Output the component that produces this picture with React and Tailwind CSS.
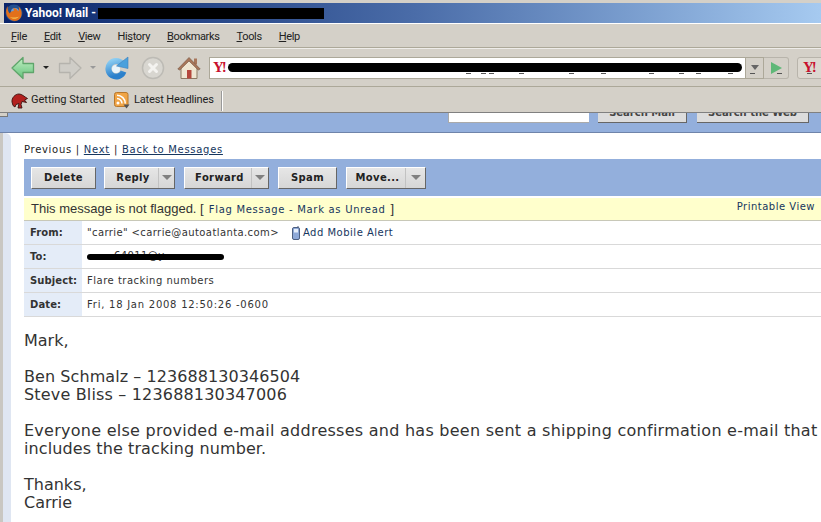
import React from "react";

const sans = "font-['Roboto','Liberation_Sans',sans-serif]";
const verdana = "font-['DejaVu_Sans',sans-serif]";

// little bits of the url that stick out under the scribble in the address bar
const urlTicks = [257, 272, 280, 310, 360, 392, 440, 470, 487, 519, 541, 568, 598, 630, 666, 690, 700, 724];

const Blot = ({ className }) => <div className={"bg-black rounded-full " + className} />;

const Menu = ({ u, rest, pre = "" }) => (
  <span>
    {pre}
    <span className="underline">{u}</span>
    {rest}
  </span>
);

const Firefox = () => (
  <svg width="18" height="18" viewBox="0 0 18 18" className="shrink-0">
    <circle cx="9" cy="9" r="8.500" fill="#24508f" />
    <circle cx="10" cy="8" r="4" fill="#6f9fd6" />
    <path d="M2.500 2c-2.500 5-1.500 10 2 13s9.500 2.500 11.500-2c1.500-4 .5-8-2.500-10.500 1 2 .5 4-.5 5-.5-2-2.500-3.500-5-3.500 1 1 1 2 .5 3-2 0-3.500 1-3.500 2.500-1.500-1-2.500-3.500-2.500-7.500z" fill="#e2701a" />
    <path d="M5 13c2 2.500 7 2.500 9-.5-2 1-6 1.500-9 .5z" fill="#f6c04e" />
  </svg>
);

const BackArrow = () => (
  <svg width="24" height="24" viewBox="0 0 24 24" className="shrink-0">
    <defs>
      <linearGradient id="backFill" x1="0" y1="0" x2="0" y2="1">
        <stop offset="0" stopColor="#c4efc4" />
        <stop offset="1" stopColor="#62c27a" />
      </linearGradient>
    </defs>
    <path d="M1 12 12 1.500V7.500h10.500v9H12v6z" fill="url(#backFill)" stroke="#5fa56b" strokeWidth="1.300" strokeLinejoin="round" />
  </svg>
);

const ForwardArrow = () => (
  <svg width="24" height="24" viewBox="0 0 24 24">
    <path d="M23 12 12 1.500V7.500H1.500v9H12v6z" fill="#cfcdc7" stroke="#b5b3ad" strokeWidth="1.300" strokeLinejoin="round" />
  </svg>
);

const Reload = () => (
  <svg width="24" height="24" viewBox="0 0 24 24">
    <defs>
      <linearGradient id="reloadFill" x1="0" y1="0" x2="0.300" y2="1">
        <stop offset="0" stopColor="#8ccdf2" />
        <stop offset="1" stopColor="#2b80cb" />
      </linearGradient>
    </defs>
    <circle cx="11" cy="13" r="4" fill="#eaf5fb" />
    <path d="M17 7.500A7.800 7.800 0 1 0 18.500 15.500" fill="none" stroke="url(#reloadFill)" strokeWidth="6" />
    <path d="M23 1v11.500L11.500 10z" fill="#4aa0dc" stroke="#3a80bd" strokeWidth="0.600" strokeLinejoin="round" />
  </svg>
);

const Stop = () => (
  <svg width="24" height="24" viewBox="0 0 24 24">
    <circle cx="12" cy="12" r="10.500" fill="#d8d6d0" stroke="#bdbbb5" strokeWidth="1.500" />
    <path d="m8.500 8.500 7 7m0-7-7 7" stroke="#f4f3f0" strokeWidth="3" strokeLinecap="round" />
  </svg>
);

const Home = () => (
  <svg width="24" height="24" viewBox="0 0 24 24">
    <rect x="17" y="2.500" width="3" height="6" fill="#a8765a" />
    <path d="M4 12v10.500h16V12L12 4z" fill="#efe6d2" stroke="#8d7a62" />
    <path d="M.8 13 12 1.500 23.200 13l-2 1L12 5l-9.200 9z" fill="#a8765a" stroke="#7d5b47" strokeWidth="0.700" />
    <rect x="10" y="14" width="4.500" height="8.500" fill="#b5483c" />
  </svg>
);

const Yahoo = () => (
  <span className="font-['Liberation_Serif',serif] font-bold text-[15px] leading-none text-[#c8102e] tracking-[-2px]">Y!</span>
);

const Dino = () => (
  <svg width="17" height="16" viewBox="0 0 17 16" className="shrink-0">
    <path d="M1 9c-.5-4 3-8 7-8 3 0 5 2.500 8.500 4.500l-3 1.500 2 2.500-4.500-1-1 3 1 3.500H7l1-4.500-3 1-1 2.500-2-1.500z" fill="#b3201e" stroke="#3a1210" strokeWidth="0.900" />
  </svg>
);

const Rss = () => (
  <svg width="16" height="17" viewBox="0 0 16 17">
    <rect x="0.500" y="0.500" width="13.500" height="14" rx="2" fill="#f0a445" stroke="#b8772b" />
    <circle cx="4" cy="11" r="1.500" fill="#fff" />
    <path d="M3 6.500a5 5 0 0 1 5 5M3 3.200a8.300 8.300 0 0 1 8.300 8.300" fill="none" stroke="#fff" strokeWidth="1.500" />
    <path d="M9.500 12.500h6l-3 4z" fill="#555" />
  </svg>
);

const Phone = () => (
  <svg width="8" height="14" viewBox="0 0 8 14">
    <rect x="0.500" y="1.500" width="7" height="12" rx="1.500" fill="#8ea9d8" stroke="#4d5f80" />
    <rect x="2" y="3" width="4" height="3.500" fill="#e5eefb" />
    <path d="M6 1.500V0" stroke="#4d5f80" />
  </svg>
);

const Button = ({ label, width, menu, menuWidth }) => (
  <div
    className={"flex h-[22px] bg-gradient-to-b from-[#e6e6e6] to-[#d6d6d6] border border-t-white border-l-white border-r-[#666] border-b-[#666] text-[10px] tracking-[0.35px] font-bold text-[#222] " + width}
  >
    <div className={"flex-1 flex items-center justify-center " + (menu ? "pl-[3px]" : "")}>{label}</div>
    {menu && (
      <div className={"flex items-center justify-center border-l border-[#c2c2c2] " + menuWidth}>
        <div className="w-0 h-0 border-x-[5px] border-x-transparent border-t-[5px] border-t-[#808080]" />
      </div>
    )}
  </div>
);

const Row = ({ label, tracking = "tracking-[0.4px]", children }) => (
  <div className="flex h-6 border-b border-[#d9d9d9]">
    <div className="w-[58px] shrink-0 bg-[#e4ecf8] pl-[6px] flex items-center font-bold text-[#333] tracking-[0.1px]">{label}</div>
    <div className={"flex-1 pl-[5px] flex items-center text-[#333] " + tracking}>{children}</div>
  </div>
);

export default function App() {
  return (
    <div className="w-[821px] h-[522px] overflow-hidden bg-white flex flex-col">
      {/* title bar */}
      <div className="h-[3px] bg-[#d4d0c8]" />
      <div className="bg-[#d4d0c8] pl-[4px]">
        <div className={"h-[20px] flex items-center pl-[1px] gap-[2px] bg-gradient-to-r from-[#0a246a] via-[#4a6ca8] to-[#a6caf0] text-white text-[12px] font-bold " + sans}>
          <Firefox />
          <span>Yahoo! Mail -</span>
          <Blot className="w-[226px] h-[11px] rounded-none" />
        </div>
      </div>
      <div className="h-[1px] bg-white" />

      {/* menu bar */}
      <div className={"h-[24px] pt-[3px] bg-[#d4d0c8] border-b border-[#aca899] flex items-center pl-[11px] gap-[17px] text-[11px] tracking-[-0.35px] text-[#222] " + sans}>
        <Menu u="F" rest="ile" />
        <Menu u="E" rest="dit" />
        <Menu u="V" rest="iew" />
        <Menu pre="Hi" u="s" rest="tory" />
        <Menu u="B" rest="ookmarks" />
        <Menu u="T" rest="ools" />
        <Menu u="H" rest="elp" />
      </div>

      {/* navigation toolbar */}
      <div className="h-[39px] relative bg-[#d4d0c8] border-t border-white/60 border-b border-b-[#aca899] flex items-center pl-[11px]">
        <BackArrow />
        <div className="ml-[8px] w-0 h-0 shrink-0 border-x-[3px] border-x-transparent border-t-[3px] border-t-[#222]" />
        <div className="ml-[9px] shrink-0"><ForwardArrow /></div>
        <div className="ml-[8px] w-0 h-0 shrink-0 border-x-[3px] border-x-transparent border-t-[3px] border-t-[#999]" />
        <div className="ml-[9px] shrink-0"><Reload /></div>
        <div className="ml-[12px] shrink-0"><Stop /></div>
        <div className="ml-[12px] shrink-0"><Home /></div>
        <div className="ml-[8px] w-[537px] h-[22px] bg-white border border-[#aca899] flex items-center pl-[3px] shrink-0">
          <Yahoo />
          <Blot className="ml-[3px] w-[514px] h-[9px]" />
        </div>
        <div className="w-[18px] h-[22px] border border-l-0 border-[#aca899] flex items-center justify-center shrink-0">
          <div className="w-0 h-0 border-x-[4px] border-x-transparent border-t-[5px] border-t-[#666]" />
        </div>
        <div className="w-[25px] h-[22px] border border-l-0 border-[#b8b4ab] rounded-r-[3px] flex items-center justify-center shrink-0">
          <div className="w-0 h-0 border-y-[6px] border-y-transparent border-l-[11px] border-l-[#5fb878]" />
        </div>
        <div className="ml-[8px] w-[30px] h-[22px] bg-[#dcd8d0] border border-[#b8b4ab] rounded-l-[3px] pl-[5px] flex items-center shrink-0">
          <Yahoo />
        </div>
        {urlTicks.map((x) => (
          <div key={x} className="absolute top-[24px] w-[5px] h-[1px] bg-[#555]" style={{ left: x + 209 }} />
        ))}
      </div>

      {/* bookmarks */}
      <div className={"h-[26px] pt-[2px] bg-[#d4d0c8] border-b border-[#808080] flex items-center pl-[11px] text-[11px] text-[#222] " + sans}>
        <Dino />
        <span className="ml-[3px]">Getting Started</span>
        <span className="ml-[9px]"><Rss /></span>
        <span className="ml-[4px] tracking-[-0.15px]">Latest Headlines</span>
        <div className="ml-[7px] h-[20px] w-[2px] border-l border-[#999] border-r border-r-white" />
      </div>

      {/* page header strip, cut off by the browser chrome */}
      <div className="h-[20px] bg-[#93afdc] border-b border-[#6f84aa] flex justify-end relative">
        <div className="absolute left-0 top-0 w-[8px] h-[4px] bg-[#d4d0c8] border-b border-r border-[#777]" />
        <div className="flex items-start pr-[12px]">
          <div className="w-[141px] h-[10px] bg-white border-b border-l border-[#aaa]" />
          <div className={"ml-[9px] w-[89px] h-[10px] bg-[#dcdcdc] border-b border-r border-[#666] overflow-hidden " + verdana}>
            <div className="text-[10px] font-bold text-[#444] text-center leading-[10px] -mt-[5px]">Search Mail</div>
          </div>
          <div className={"ml-[10px] w-[112px] h-[10px] bg-[#dcdcdc] border-b border-r border-[#666] overflow-hidden " + verdana}>
            <div className="text-[10px] font-bold text-[#444] text-center leading-[10px] -mt-[5px]">Search the Web</div>
          </div>
        </div>
      </div>

      {/* message page */}
      <div className={"flex-1 flex min-h-0 " + verdana}>
        <div className="w-[11px] shrink-0 bg-[#dfe6f2] rounded-tr-[6px] border-l-[3px] border-[#c9c7c2]" />
        <div className="w-[13px] shrink-0" />
        <div className="flex-1 min-w-0">
          <div className="h-[26px] pt-[6px] flex items-center text-[10px] tracking-[0.7px] text-[#222] gap-[4px]">
            <span>Previous |</span>
            <span className="underline text-[#16365e]">Next</span>
            <span>|</span>
            <span className="underline text-[#16365e]">Back to Messages</span>
          </div>

          <div className="h-[37px] bg-[#93afdc] flex items-center pl-[7px]">
            <Button label="Delete" width="w-[65px] mr-[8px]" />
            <Button label="Reply" width="w-[71px] mr-[9px]" menu menuWidth="w-[16px]" />
            <Button label="Forward" width="w-[85px] mr-[9px]" menu menuWidth="w-[17px]" />
            <Button label="Spam" width="w-[59px] mr-[9px]" />
            <Button label="Move..." width="w-[80px]" menu menuWidth="w-[20px]" />
          </div>

          <div className="h-[23px] mt-[2px] bg-[#ffffcc] border-b border-[#c8c8b8] flex items-center pl-[7px] pr-[6px]">
            <span className="font-['Liberation_Sans',sans-serif] text-[13px] text-[#333]">This message is not flagged. [</span>
            <span className="ml-[5px] text-[10px] tracking-[0.7px] text-[#16365e]">Flag Message - Mark as Unread</span>
            <span className="ml-[5px] font-['Liberation_Sans',sans-serif] text-[13px] text-[#333]">]</span>
            <span className="ml-auto text-[10px] tracking-[0.5px] text-[#16365e] -mt-[5px]">Printable View</span>
          </div>

          <div className="text-[10px] tracking-[0.5px]">
            <Row label="From:">
              <span>"carrie" &lt;carrie@autoatlanta.com&gt;</span>
              <span className="ml-[13px]"><Phone /></span>
              <span className="ml-[3px] tracking-[0.5px] text-[#16365e]">Add Mobile Alert</span>
            </Row>
            <Row label="To:">
              <div className="relative w-[137px] h-[6px]">
                <span className="absolute left-[27px] -top-[3px] leading-none">64011@y</span>
                <Blot className="absolute inset-0" />
              </div>
            </Row>
            <Row label="Subject:" tracking="tracking-[0.5px]">Flare tracking numbers</Row>
            <Row label="Date:" tracking="tracking-[0.75px]">Fri, 18 Jan 2008 12:50:26 -0600</Row>
          </div>

          <div className="mt-[15px] text-[16px] leading-[18px] text-[#333] whitespace-nowrap">
            <p>Mark,</p>
            <p className="mt-[18px] tracking-[0.07px]">Ben Schmalz – 123688130346504</p>
            <p className="tracking-[0.17px]">Steve Bliss – 123688130347006</p>
            <p className="mt-[18px] tracking-[0.26px]">Everyone else provided e-mail addresses and has been sent a shipping confirmation e-mail that</p>
            <p className="tracking-[0.1px]">includes the tracking number.</p>
            <p className="mt-[18px]">Thanks,</p>
            <p>Carrie</p>
          </div>
        </div>
      </div>
    </div>
  );
}
